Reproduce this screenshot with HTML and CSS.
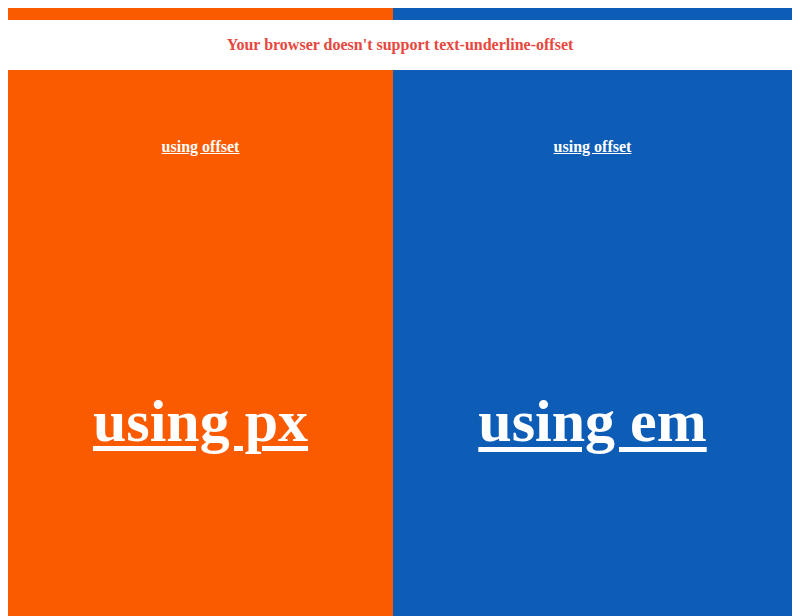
FILE: index.html
```html
<!DOCTYPE html>
<html>
<head>
<meta charset="utf-8">
<link rel="stylesheet" href="styles.css">
</head>
<body>
<div class="bar">
  <div class="orange"></div>
  <div class="blue"></div>
</div>
<div class="notice">Your browser doesn't support text-underline-offset</div>
<div class="panels">
  <div class="panel orange">
    <div class="small">using offset</div>
    <div class="big big-px">using px</div>
  </div>
  <div class="panel blue">
    <div class="small">using offset</div>
    <div class="big big-em">using em</div>
  </div>
</div>
</body>
</html>
```
FILE: styles.css
```css
body {
  margin: 8px;
  font-family: "Liberation Serif", "Times New Roman", serif;
  background: #ffffff;
}
.orange { background: #fa5a00; }
.blue { background: #0d5db7; }
.bar {
  display: grid;
  grid-template-columns: 385px 399px;
  height: 12px;
}
.notice {
  height: 50px;
  display: flex;
  align-items: center;
  justify-content: center;
  color: #e8473d;
  font-weight: bold;
  font-size: 16px;
}
.panels {
  display: grid;
  grid-template-columns: 385px 399px;
  height: 560px;
}
.panel {
  color: #ffffff;
  text-align: center;
  font-weight: bold;
  padding-top: 68px;
}
.small {
  font-size: 16px;
  text-decoration: underline;
}
.big {
  font-size: 60px;
  margin-top: 231px;
  text-decoration: underline;
  text-decoration-thickness: 5px;
}
.big-px { text-underline-offset: 5px; }
.big-em { text-underline-offset: 0.1em; }
```
